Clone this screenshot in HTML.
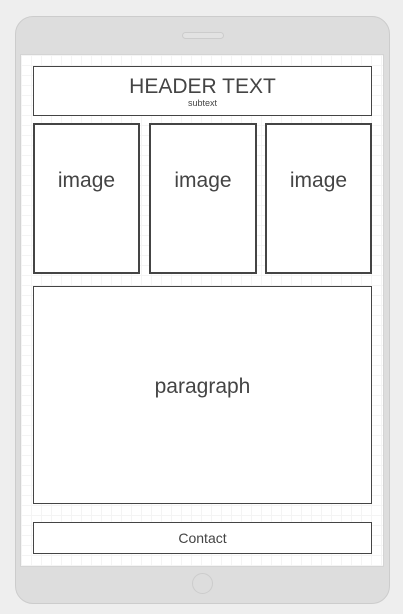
<!DOCTYPE html><html><head><style>
body{margin:0;width:403px;height:614px;background:#eeeeee;position:relative;font-family:"Liberation Sans",sans-serif;color:#444;overflow:hidden}
.dev{position:absolute;left:15px;top:16px;width:373px;height:586px;background:#dddddd;border:1px solid #cccccc;border-radius:18px}
.spk{position:absolute;left:182px;top:32px;width:40px;height:5px;border:1px solid #ccc;border-radius:4px;background:#e2e2e2}
.home{position:absolute;left:192px;top:573px;width:19px;height:19px;border:1px solid #ccc;border-radius:50%}
.scr{position:absolute;left:20px;top:54px;width:362px;height:511px;border:1px solid #d4d4d4;background-color:#fff;background-image:linear-gradient(#f4f4f4 1px,transparent 1px),linear-gradient(90deg,#f4f4f4 1px,transparent 1px);background-size:10px 10px}
.b{position:absolute;box-sizing:border-box;background:#fff;border:1px solid #444;text-align:center}
.img{border:2px solid #444;font-size:21px;padding-top:44px}
</style></head><body>
<div class="dev"></div><div class="spk"></div><div class="home"></div>
<div class="scr"></div>
<div class="b" style="left:33px;top:66px;width:339px;height:50px"><div style="font-size:21px;margin-top:8px;line-height:23px">HEADER TEXT</div><div style="font-size:9px;line-height:10px">subtext</div></div>
<div class="b img" style="left:33px;top:123px;width:107px;height:151px">image</div>
<div class="b img" style="left:149px;top:123px;width:108px;height:151px">image</div>
<div class="b img" style="left:265px;top:123px;width:107px;height:151px">image</div>
<div class="b" style="left:33px;top:286px;width:339px;height:218px;font-size:21px;line-height:200px">paragraph</div>
<div class="b" style="left:33px;top:522px;width:339px;height:32px;font-size:14px;line-height:31px">Contact</div>
</body></html>
